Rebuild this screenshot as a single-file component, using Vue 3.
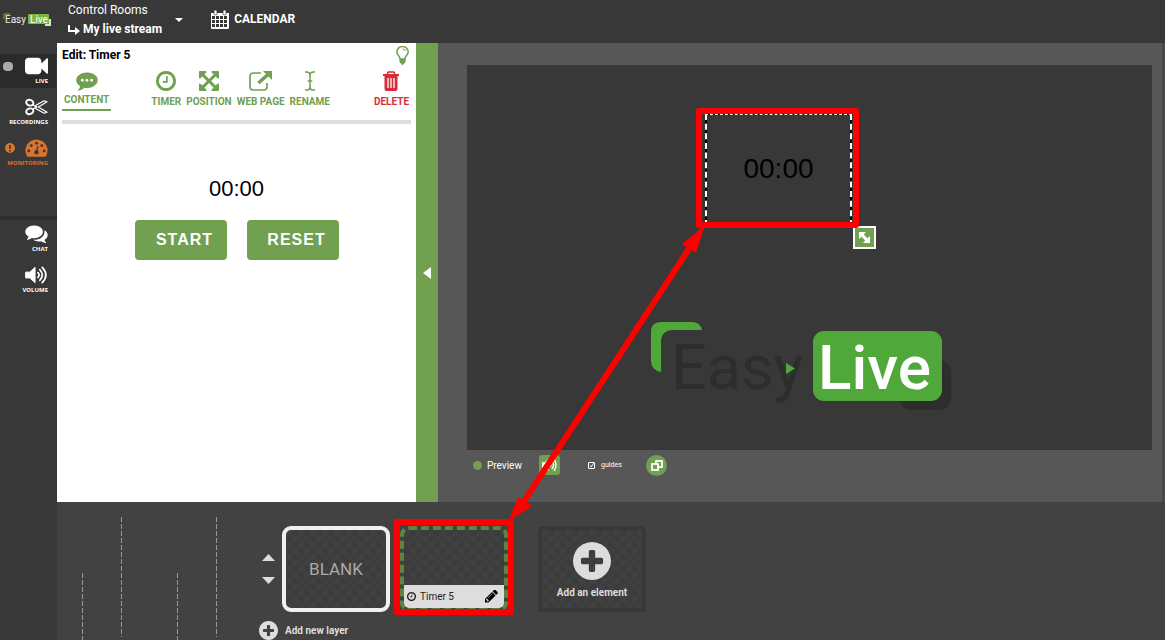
<script setup>
import { ref } from 'vue'

const guides = ref(true)

const clock = 'M1024 544v448q0 14-9 23t-23 9h-320q-14 0-23-9t-9-23v-64q0-14 9-23t23-9h224v-352q0-14 9-23t23-9h64q14 0 23 9t9 23zm416 352q0-148-73-273t-198-198-273-73-273 73-198 198-73 273 73 273 198 198 273 73 273-73 198-198 73-273zm224 0q0 209-103 385.5t-279.5 279.5-385.5 103-385.5-103-279.5-279.5-103-385.5 103-385.5 279.5-279.5 385.5-103 385.5 103 279.5 279.5 103 385.5z'
const plusCircle = 'M1344 960v-128q0-26-19-45t-45-19h-256v-256q0-26-19-45t-45-19h-128q-26 0-45 19t-19 45v256h-256q-26 0-45 19t-19 45v128q0 26 19 45t45 19h256v256q0 26 19 45t45 19h128q26 0 45-19t19-45v-256h256q26 0 45-19t19-45zm320-64q0 209-103 385.5t-279.5 279.5-385.5 103-385.5-103-279.5-279.5-103-385.5 103-385.5 279.5-279.5 385.5-103 385.5 103 279.5 279.5 103 385.5z'
const camera = 'M1792 352v1088q0 42-39 59-13 5-25 5-27 0-45-19l-403-403v166q0 119-84.5 203.5t-203.5 84.5h-704q-119 0-203.5-84.5t-84.5-203.5v-704q0-119 84.5-203.5t203.5-84.5h704q119 0 203.5 84.5t84.5 203.5v165l403-402q18-19 45-19 12 0 25 5 39 17 39 59z'
const commenting = 'M640 896q0-53-37.5-90.5t-90.5-37.5-90.5 37.5-37.5 90.5 37.5 90.5 90.5 37.5 90.5-37.5 37.5-90.5zm384 0q0-53-37.5-90.5t-90.5-37.5-90.5 37.5-37.5 90.5 37.5 90.5 90.5 37.5 90.5-37.5 37.5-90.5zm384 0q0-53-37.5-90.5t-90.5-37.5-90.5 37.5-37.5 90.5 37.5 90.5 90.5 37.5 90.5-37.5 37.5-90.5zm384 0q0 174-120 321.5t-326 233-450 85.5q-110 0-211-18-173 173-435 229-52 10-86 13-12 1-22-6t-13-18q-4-15 20-37 5-5 23.5-21.5t25.5-23.5 23.5-25.5 24-31.5 20.5-37 20-48 14.5-57.5 12.5-72.5q-146-90-229.5-216.5t-83.5-269.5q0-174 120-321.5t326-233 450-85.5 450 85.5 326 233 120 321.5z'
const comments = 'M1408 768q0 139-94 257t-256.5 186.5-353.5 68.5q-86 0-176-16-124 88-278 128-36 9-86 16h-3q-11 0-20.5-8t-11.5-21q-1-3-1-6.5t.5-6.5 2-6l2.5-5 3.5-5.5 4-5 4.5-5 4-4.5q5-6 23-25t26-29.5 22.5-29 25-38.5 20.5-44q-124-72-195-177t-71-224q0-139 94-257t256.5-186.5 353.5-68.5 353.5 68.5 256.5 186.5 94 257zm384 256q0 120-71 224.5t-195 176.5q10 24 20.5 44t25 38.5 22.5 29 26 29.5 23 25q1 1 4 4.5t4.5 5 4 5 3.5 5.5l2.5 5 2 6 .5 6.5-1 6.5q-3 14-13 22t-22 7q-50-7-86-16-154-40-278-128-90 16-176 16-271 0-472-132 58 4 88 4 161 0 309-45t264-129q125-92 192-212t67-254q0-77-23-152 129 71 204 178t75 230z'
const arrowsAlt = 'M1411 541l-355 355 355 355 144-144q29-31 70-14 39 17 39 59v448q0 26-19 45t-45 19h-448q-42 0-59-40-17-39 14-69l144-144-355-355-355 355 144 144q31 30 14 69-17 40-59 40h-448q-26 0-45-19t-19-45v-448q0-42 40-59 39-17 69 14l144 144 355-355-355-355-144 144q-19 19-45 19-12 0-24-5-40-17-40-59v-448q0-26 19-45t45-19h448q42 0 59 40 17 39-14 69l-144 144 355 355 355-355-144-144q-31-30-14-69 17-40 59-40h448q26 0 45 19t19 45v448q0 42-39 59-13 5-25 5-26 0-45-19z'
const pencil = 'M491 1536l91-91-235-235-91 91v107h128v128h107zm523-928q0-22-22-22-10 0-17 7l-542 542q-7 7-7 17 0 22 22 22 10 0 17-7l542-542q7-7 7-17zm-54-192l416 416-832 832h-416v-416zm683 96q0 53-37 90l-166 166-416-416 166-165q36-38 90-38 53 0 91 38l235 234q37 39 37 91z'
</script>

<template>
  <div class="app">
    <aside class="sidebar">
      <svg class="brand" viewBox="0 0 50 16" aria-label="EasyLive">
        <path d="M1 6V2Q1 1 2 1H7" fill="none" stroke="#7db83a" />
        <path d="M47 6V12H42" fill="none" stroke="#ddd" stroke-width="2" />
        <rect x="25" y="1" width="21" height="10" rx="1" fill="#7db83a" />
        <text x="2" y="10" font-size="10" fill="#eee">Easy</text>
        <text x="27" y="10" font-size="10" fill="#fff">Live</text>
      </svg>

      <button class="nav active">
        <span class="status"></span>
        <svg class="nav-icon" viewBox="0 224 1792 1344"><path :d="camera" /></svg>
        <span>LIVE</span>
      </button>
      <button class="nav">
        <svg class="nav-icon" viewBox="0 0 24 18" fill="none" stroke="currentColor">
          <ellipse cx="5" cy="4.5" rx="3.8" ry="2.9" stroke-width="2" transform="rotate(20 5 4.5)" />
          <ellipse cx="5" cy="13.5" rx="3.8" ry="2.9" stroke-width="2" transform="rotate(-20 5 13.5)" />
          <path d="M8 6.5 12 9 8 11.5M11 7.5 20 2.5 23 3.5 14 9 23 14.5 20 15.5 11 10.5" stroke-width="1.3" stroke-linejoin="round" />
          <circle cx="12" cy="9" r=".7" />
        </svg>
        <span>RECORDINGS</span>
      </button>
      <button class="nav warning">
        <svg class="alert" viewBox="0 0 10 10"><circle cx="5" cy="5" r="5" fill="currentColor" /><path d="M5 2V6M5 7V8.5" stroke="#383838" stroke-width="1.6" /></svg>
        <svg class="nav-icon" viewBox="0 0 24 18">
          <path d="M12 0A11.7 11.7 0 0 0 2 17.5Q2.4 18 3 18H21Q21.6 18 22 17.5A11.7 11.7 0 0 0 12 0Z" fill="currentColor" />
          <g fill="#383838"><circle cx="4" cy="12" r="1.5" /><circle cx="6.5" cy="6.5" r="1.5" /><circle cx="12" cy="4" r="1.5" /><circle cx="17.5" cy="6.5" r="1.5" /><circle cx="20" cy="12" r="1.5" /><circle cx="12" cy="13.5" r="2.3" /></g>
          <path d="M12 13 13.5 7" stroke="#383838" stroke-width="1.3" />
        </svg>
        <span>MONITORING</span>
      </button>

      <hr class="divider" />

      <button class="nav">
        <svg class="nav-icon" viewBox="0 224 1792 1440"><path :d="comments" /></svg>
        <span>CHAT</span>
      </button>
      <button class="nav">
        <svg class="nav-icon" viewBox="0 0 24 18" fill="none" stroke="currentColor" stroke-width="1.8" stroke-linecap="round">
          <path d="M1 6H5L10.5 1V17L5 12H1Z" fill="currentColor" stroke-width="1" stroke-linejoin="round" />
          <path d="M13.5 6.5Q16 9 13.5 11.5M15.5 3.5Q20.5 9 15.5 14.5M18 1Q25.5 9 18 17" />
        </svg>
        <span>VOLUME</span>
      </button>
    </aside>

    <header class="topbar">
      <button class="room">
        <span class="room-names">
          <span>Control Rooms</span>
          <strong>
            <svg width="12" height="10" viewBox="0 0 12 10"><path d="M1 0V6H8" fill="none" stroke="#fff" stroke-width="2" /><path d="M7 2 12 6 7 10Z" fill="#fff" /></svg>
            My live stream
          </strong>
        </span>
        <svg width="8" height="4" viewBox="0 0 8 4"><path d="M0 0H8L4 4Z" fill="#fff" /></svg>
      </button>
      <a class="calendar" href="#calendar">
        <svg width="18" height="19" viewBox="0 0 18 19">
          <path d="M0 3H18V18Q18 19 17 19H1Q0 19 0 18Z" fill="#fff" />
          <g fill="#383838"><template v-for="row in 3" :key="row"><rect v-for="col in 4" :key="col" :x="col * 4 - 3" :y="row * 4 + 2" width="3" height="3" /></template></g>
          <g fill="#fff" stroke="#383838" stroke-width=".7"><rect x="3" y="0" width="3" height="5" rx="1.5" /><rect x="12" y="0" width="3" height="5" rx="1.5" /></g>
        </svg>
        CALENDAR
      </a>
    </header>

    <main class="workspace">
      <section class="editor">
        <div class="editor-head">
          <h1>Edit: Timer 5</h1>
          <button class="tip" aria-label="Tips">
            <svg width="13" height="19" viewBox="0 0 13 19"><path d="M4 13Q4 11 2.5 9.5Q.8 7.5.8 5.8A5.7 5.2 0 0 1 12.2 5.8Q12.2 7.5 10.5 9.5Q9 11 9 13Z" fill="none" stroke="currentColor" stroke-width="1.5" /><path d="M6.5 3Q9 3 9.5 5" fill="none" stroke="currentColor" /><path d="M3.5 13H9.5V16Q9 17 8 17.5L7 19H6L5 17.5Q4 17 3.5 16Z" fill="currentColor" /></svg>
          </button>
        </div>
        <nav class="tools">
          <button class="tool current">
            <svg viewBox="0 128 1792 1664"><path :d="commenting" /></svg><span>CONTENT</span>
          </button>
          <div class="tool-group">
            <button class="tool"><svg viewBox="128 128 1536 1536"><path :d="clock" /></svg><span>TIMER</span></button>
            <button class="tool"><svg viewBox="128 128 1536 1536"><path :d="arrowsAlt" /></svg><span>POSITION</span></button>
            <button class="tool">
              <svg viewBox="0 0 24 20"><path d="M12 2H4.5Q1 2 1 5.5V15.5Q1 19 4.5 19H14.5Q18 19 18 15.5V12" fill="none" stroke="currentColor" stroke-width="1.7" /><path d="M9.5 12 19 3.5" stroke="currentColor" stroke-width="3.5" /><path d="M14 0H23V9Z" /></svg><span>WEB PAGE</span>
            </button>
            <button class="tool">
              <svg viewBox="0 0 12 22"><path d="M.5 1H2Q6 1 6 5V17Q6 21 2 21H.5M11.5 1H10Q6 1 6 5V17Q6 21 10 21H11.5M3.5 11H8.5" fill="none" stroke="currentColor" stroke-width="1.7" /></svg><span>RENAME</span>
            </button>
          </div>
          <button class="tool danger">
            <svg viewBox="0 0 18 20"><path d="M5.5 3V2Q5.5 1 6.5 1H11.5Q12.5 1 12.5 2V3" fill="none" stroke="currentColor" stroke-width="1.6" /><path d="M1 3H17V5H1ZM2.5 5H15.5V18Q15.5 20 13.5 20H4.5Q2.5 20 2.5 18Z" /><path d="M6 7V17M9 7V17M12 7V17" stroke="#fff" stroke-width="1.3" /></svg><span>DELETE</span>
          </button>
        </nav>
        <div class="timer">
          <output>00:00</output>
          <div class="timer-actions"><button>START</button><button>RESET</button></div>
        </div>
      </section>

      <button class="collapse" aria-label="Collapse editor"><svg width="8" height="12" viewBox="0 0 8 12"><path d="M8 0V12L0 6Z" fill="#fff" /></svg></button>

      <section class="preview">
        <div class="stage">
          <div class="stage-timer">00:00</div>
          <button class="resize" aria-label="Resize"><svg width="13" height="13" viewBox="0 0 13 13"><path d="M1 1H8L5.8 3.6 9.4 7.2 12 5V12H5L7.2 9.4 3.6 5.8 1 8Z" fill="#fff" /></svg></button>
          <svg class="stage-logo" viewBox="0 0 300 90" aria-label="EasyLive">
            <path d="M0 10Q0 0 10 0H41Q49 0 51 8H23Q10 8 10 20V50Q0 48 0 39Z" fill="#50a83a" />
            <rect x="248" y="38" width="52" height="50" rx="12" fill="#2d2d2d" />
            <rect x="162" y="9" width="129" height="70" rx="11" fill="#50a83a" />
            <text x="20" y="67" font-size="63" fill="#2d2d2d">Easy</text>
            <text x="167" y="67" font-size="62" font-weight="500" fill="#fff">Live</text>
            <path d="M135 41 144 46.5 135 52Z" fill="#50a83a" />
          </svg>
        </div>
        <div class="preview-bar">
          <span class="preview-state">Preview</span>
          <button class="audio" aria-label="Audio"><svg width="15" height="12" viewBox="0 0 15 12" fill="none" stroke="#fff" stroke-width="1.4"><path d="M0 4H3L6 1V11L3 8H0Z" fill="#fff" /><path d="M8 4Q10 6 8 8M10 2Q13 6 10 10M12 0Q16 6 12 12" /></svg></button>
          <label class="guides"><input v-model="guides" type="checkbox" />guides</label>
          <button class="popout" aria-label="Pop out"><svg width="12" height="11" viewBox="0 0 12 11" fill="none" stroke="#fff" stroke-width="1.8"><rect x="5" y="1" width="6" height="6" /><rect x="1" y="4" width="6" height="6" fill="#70a050" /></svg></button>
        </div>
      </section>
    </main>

    <section class="layers">
      <div class="tracks"><i></i><i class="long"></i><i class="late"></i><i class="long"></i></div>
      <div class="layer">
        <div class="layer-row">
          <div class="order">
            <button aria-label="Move layer up"><svg width="13" height="7" viewBox="0 0 13 7"><path d="M0 7H13L6.5 0Z" fill="#ddd" /></svg></button>
            <button aria-label="Move layer down"><svg width="13" height="7" viewBox="0 0 13 7"><path d="M0 0H13L6.5 7Z" fill="#ddd" /></svg></button>
          </div>
          <button class="card blank">BLANK</button>
          <div class="card item">
            <div class="item-bar">
              <svg width="9" height="9" viewBox="128 128 1536 1536"><path :d="clock" /></svg>
              <span>Timer 5</span>
              <button aria-label="Edit Timer 5"><svg width="13" height="13" viewBox="128 256 1536 1408"><path :d="pencil" /></svg></button>
            </div>
          </div>
          <button class="card add">
            <svg width="38" height="38" viewBox="128 128 1536 1536"><path :d="plusCircle" fill="#ddd" /></svg>
            Add an element
          </button>
        </div>
        <button class="new-layer"><svg width="19" height="19" viewBox="128 128 1536 1536"><path :d="plusCircle" fill="#ddd" /></svg>Add new layer</button>
      </div>
    </section>

    <svg class="annotation" width="1165" height="640" viewBox="0 0 1165 640" aria-hidden="true">
      <g fill="none" stroke="#f00" stroke-width="6" stroke-linejoin="round">
        <rect x="699" y="111" width="157" height="114" />
        <rect x="397" y="522" width="114" height="90" />
        <path d="M698 235 517 512" />
      </g>
      <path d="M705 225 682 244 696 253ZM508 522 518 497 532 506Z" fill="#f00" />
    </svg>
  </div>
</template>

<style>
body { margin: 0; background: #424242; }
</style>

<style scoped>
.app {
  position: relative;
  display: grid;
  grid-template-columns: 57px 1fr;
  grid-template-rows: 43px auto 1fr;
  min-height: 100vh;
  overflow: hidden;
  color: #fff;
  font-family: Roboto, "Open Sans", sans-serif;
  font-size: 10px;
}
.app * { box-sizing: border-box; }
button { margin: 0; padding: 0; border: 0; background: none; color: inherit; font: inherit; cursor: pointer; }
svg { display: block; flex: none; }

.sidebar { grid-row: 1 / 4; background: #383838; }
.brand { width: 50px; height: 16px; margin: 13px 0 25px 3px; }
.nav {
  position: relative;
  display: flex;
  flex-direction: column;
  align-items: flex-end;
  width: 56px;
  height: 34px;
  margin-bottom: 7px;
  padding: 3px 8px 0 0;
  font: bold 6px/13px "Open Sans", sans-serif;
}
.nav.active { background: #2b2b2b; }
.nav.warning { color: #d9742e; }
.nav-icon { width: 23px; height: 18px; fill: currentColor; }
.nav-icon[fill="none"] { fill: none; }
.status { position: absolute; left: 3px; top: 8px; width: 10px; height: 9px; border-radius: 4px; background: #aaa; }
.alert { position: absolute; left: 5px; top: 7px; width: 10px; height: 10px; }
.divider { height: 4px; margin: 46px 0 2px; border: 0; background: #2d2d2d; }

.topbar { display: flex; align-items: flex-start; gap: 28px; padding: 0 11px; background: #383838; }
.room { display: flex; align-items: center; gap: 13px; height: 40px; text-align: left; font-size: 12px; line-height: 19px; }
.room-names, .room-names > span { display: block; }
.room strong { display: flex; align-items: center; gap: 3px; }
.calendar { display: flex; align-items: center; gap: 5px; height: 38px; color: #fff; font-size: 12px; font-weight: bold; text-decoration: none; }

.workspace { display: flex; border-right: 3px solid #484848; }
.editor { width: 359px; flex: none; padding: 3px 5px 0; background: #fff; color: #70a050; }
.editor-head { display: flex; align-items: flex-start; justify-content: space-between; height: 24px; padding-right: 2px; }
h1 { margin: 0; color: #000; font-size: 12px; line-height: 18px; }
.tools { display: flex; justify-content: space-between; align-items: flex-start; height: 54px; padding: 1px 2px 0 0; border-bottom: 4px solid #ddd; }
.tool { display: flex; flex-direction: column; align-items: center; font-size: 10px; font-weight: bold; line-height: 18px; }
.tool svg { width: 24px; height: 20px; fill: currentColor; }
.tool span { margin-top: 2px; }
.tool.current { border-bottom: 2px solid #70a050; padding: 0 2px; }
.tool.current span { margin-top: 0; }
.tool-group { display: flex; gap: 5px; margin-right: 4px; }
.tool.danger { color: #d82c38; }
.timer { display: flex; flex-direction: column; align-items: center; padding-top: 53px; font-family: "Liberation Sans", sans-serif; }
.timer output { color: #000; font-size: 22px; line-height: 24px; }
.timer-actions { display: flex; gap: 20px; margin-top: 19px; }
.timer-actions button { width: 92px; height: 40px; padding-left: 8px; border-radius: 4px; background: #70a050; color: #fff; font-size: 16px; font-weight: bold; letter-spacing: 1px; }
.collapse { display: grid; place-items: center; width: 22px; flex: none; background: #70a050; }

.preview { flex: 1; padding: 22px 10px 0 29px; background: #575757; }
.stage { position: relative; aspect-ratio: 16 / 9; background: #383838; overflow: hidden; }
.stage-timer {
  position: absolute;
  left: 238px;
  top: 49px;
  width: 147px;
  height: 112px;
  border: 2px dashed #fff;
  border-top-width: 1px;
  background: linear-gradient(#383838, #383838) padding-box, linear-gradient(#000, #000) border-box;
  color: #000;
  font: 28px/108px "Liberation Sans", sans-serif;
  text-align: center;
}
.resize { position: absolute; left: 386px; top: 161px; display: grid; place-items: center; width: 23px; height: 23px; border: 2px solid #fff; background: #70a050; }
.stage-logo { position: absolute; left: 184px; top: 257px; width: 300px; height: 90px; }
.preview-bar { display: flex; align-items: center; height: 52px; padding: 0 6px 22px; }
.preview-state { display: flex; align-items: center; gap: 5px; width: 66px; }
.preview-state::before { content: ""; width: 9px; height: 9px; border-radius: 50%; background: #70a050; }
.audio { display: grid; place-items: center; width: 21px; height: 20px; border-radius: 3px; background: #70a050; }
.guides { display: flex; align-items: center; gap: 5px; width: 58px; margin: 0 0 0 28px; font-size: 7px; }
.guides input { appearance: none; display: grid; place-items: center; width: 7px; height: 7px; margin: 0 1px 0 0; border: 1px solid #fff; border-radius: 1px; }
.guides input:checked::before { content: "✓"; color: #fff; font: bold 8px/6px "DejaVu Sans", sans-serif; }
.popout { display: grid; place-items: center; width: 21px; height: 21px; border-radius: 50%; background: #70a050; }

.layers { display: flex; height: 138px; padding-left: 25px; background: #424242; overflow: hidden; }
.tracks { display: flex; width: 177px; gap: 38px; flex: none; }
.tracks i { width: 1px; margin-top: 71px; background: repeating-linear-gradient(#999 0 5px, transparent 5px 7px); }
.tracks .long { height: 120px; margin-top: 15px; }
.tracks .late { margin-left: 17px; }
.layer { padding-top: 24px; color: #ddd; }
.layer-row { display: flex; align-items: center; }
.order { display: grid; gap: 16px; width: 23px; padding-left: 3px; }
.card {
  width: 108px;
  height: 86px;
  border: 4px solid #f0f0f0;
  border-radius: 9px;
  background: repeating-conic-gradient(#3c3c3c 0 25%, #404040 0 50%) padding-box 0 0 / 12px 12px;
}
.blank { color: #aaa; font-size: 17px; }
.item { display: flex; align-items: flex-end; margin: 0 30px 0 10px; border: 4px dashed #5c8640; }
.item-bar { display: flex; align-items: center; gap: 4px; width: 100%; height: 23px; padding: 0 6px 0 3px; border-radius: 0 0 5px 5px; background: #ddd; color: #222; }
.item-bar button { margin-left: auto; color: #000; }
.item-bar svg { fill: currentColor; }
.add { display: flex; flex-direction: column; align-items: center; gap: 7px; padding-top: 12px; border-color: #383838; border-radius: 4px; font-weight: bold; }
.new-layer { display: flex; align-items: center; gap: 7px; margin-top: 9px; font-weight: bold; }
.annotation { position: absolute; left: 0; top: 0; pointer-events: none; }
</style>
